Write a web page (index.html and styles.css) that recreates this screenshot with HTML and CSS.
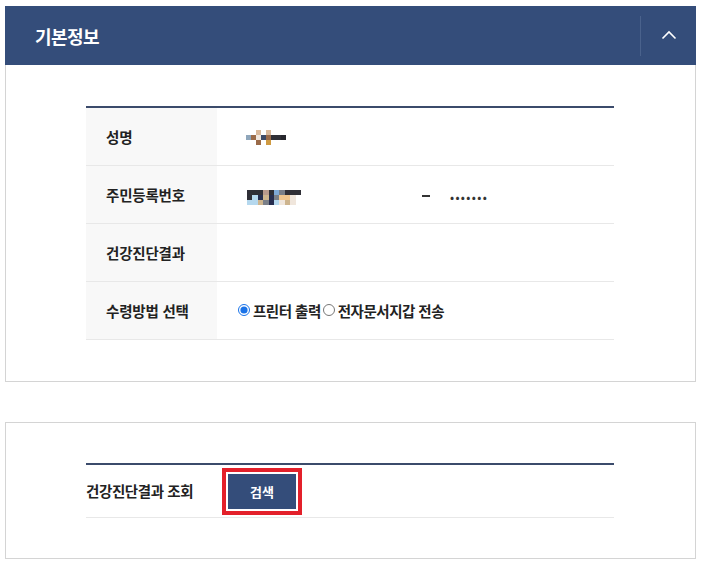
FILE: index.html
```html
<!DOCTYPE html>
<html lang="ko">
<head>
<meta charset="utf-8">
<link rel="stylesheet" href="styles.css">
</head>
<body>
<div class="page">
  <section class="panel">
    <header class="panel-head">
      <h2 class="panel-title">기본정보</h2>
      <button class="toggle" type="button" aria-label="접기">
        <svg width="16" height="10" viewBox="0 0 16 10"><path d="M1.5 8.5 L8 2 L14.5 8.5" fill="none" stroke="#fff" stroke-width="1.6"/></svg>
      </button>
    </header>
    <div class="panel-body">
      <table class="info">
        <tr>
          <th>성명</th>
          <td>
            <div class="mosaic name">
              <i></i><i></i><i class="c-tan"></i><i></i><i class="c-tan"></i><i></i><i></i><i></i>
              <i class="c-gb"></i><i class="c-br"></i><i class="c-lt"></i><i class="c-db"></i><i class="c-br"></i><i class="c-dk"></i><i class="c-dk"></i><i class="c-dk2"></i>
              <i></i><i></i><i class="c-br"></i><i></i><i class="c-or"></i><i></i><i></i><i></i>
            </div>
          </td>
        </tr>
        <tr>
          <th>주민등록번호</th>
          <td>
            <div class="rrn">
              <div class="mosaic rrn-front">
                <i class="c-dk"></i><i class="c-dk"></i><i class="c-dk"></i><i class="c-pk"></i><i class="c-dk"></i><i class="c-sb"></i><i class="c-gr"></i><i class="c-dk"></i><i class="c-dk"></i><i class="c-dk"></i>
                <i class="c-dk"></i><i class="c-lb"></i><i class="c-nv"></i><i class="c-tn2"></i><i class="c-nv"></i><i class="c-gr"></i><i class="c-or2"></i><i class="c-or2"></i><i class="c-lt"></i><i></i>
                <i class="c-lb"></i><i class="c-lb"></i><i class="c-tn2"></i><i class="c-gr"></i><i class="c-nv"></i><i class="c-lb"></i><i class="c-lt"></i><i class="c-tn2"></i><i class="c-lt"></i><i></i>
              </div>
              <span class="dash"></span>
              <span class="dots">•••••••</span>
            </div>
          </td>
        </tr>
        <tr>
          <th>건강진단결과</th>
          <td></td>
        </tr>
        <tr>
          <th>수령방법 선택</th>
          <td>
            <div class="radios">
              <label class="radio"><input type="radio" name="recv" checked><span>프린터 출력</span></label>
              <label class="radio"><input type="radio" name="recv"><span>전자문서지갑 전송</span></label>
            </div>
          </td>
        </tr>
      </table>
    </div>
  </section>

  <section class="panel plain">
    <div class="panel-body lookup-body">
      <div class="lookup">
        <span class="lookup-label">건강진단결과 조회</span>
        <span class="highlight"><button class="btn" type="button">검색</button></span>
      </div>
    </div>
  </section>
</div>
</body>
</html>
```

FILE: styles.css
```css
* { box-sizing: border-box; }
html, body { margin: 0; padding: 0; background: #fff; }
body {
  font-family: "Noto Sans CJK KR", "Noto Sans", sans-serif;
  color: #222;
}
.page {
  width: 691px;
  margin-left: 5px;
  padding-top: 6px;
}
.panel {
  border: 1px solid #d4d4d4;
  border-top: none;
}
.panel-head {
  height: 59px;
  margin: 0 -1px;
  background: #344d7a;
  display: flex;
  align-items: center;
  justify-content: space-between;
  padding-left: 30px;
}
.panel-title {
  margin: 0;
  color: #fff;
  font-size: 18px;
  font-weight: 700;
  letter-spacing: -0.6px;
}
.toggle {
  width: 56px;
  height: 40px;
  border: none;
  border-left: 1px solid #4a628c;
  background: transparent;
  display: flex;
  align-items: center;
  justify-content: center;
  padding: 0 0 2px 0;
}
.panel-body {
  padding: 41px 81px 41px 80px;
}
.info {
  width: 100%;
  border-collapse: collapse;
  border-top: 2px solid #3b4b6b;
}
.info th, .info td {
  height: 58px;
  border-bottom: 1px solid #e8e8e8;
  font-size: 14.5px;
  vertical-align: middle;
}
.info th {
  width: 131px;
  background: #f8f8f8;
  text-align: left;
  padding: 0 0 0 20px;
  font-weight: 700;
  color: #222;
  letter-spacing: -0.2px;
}
.info td {
  padding: 0 0 0 20px;
}
.mosaic {
  display: grid;
  grid-auto-rows: 5px;
}
.mosaic i { display: block; }
.name {
  grid-template-columns: repeat(8, 5px);
  width: 40px;
  margin-left: 9px;
  margin-top: 3px;
}
.rrn { display: flex; align-items: center; }
.rrn-front {
  grid-template-columns: repeat(10, 5.4px);
  margin-left: 10px;
  margin-top: 6px;
}
.dash {
  width: 8px;
  height: 2px;
  background: #333;
  margin-left: 121px;
  margin-top: 4px;
}
.dots {
  margin-left: 20px;
  font-size: 12px;
  letter-spacing: 1.4px;
  color: #333;
  margin-top: 4px;
}
.c-tan { background: #d9b89a; }
.c-gb { background: #8fa6bb; }
.c-br { background: #9a6a48; }
.c-lt { background: #f0e6dc; }
.c-db { background: #3d4a66; }
.c-dk { background: #2f2f36; }
.c-dk2 { background: #26262c; }
.c-or { background: #cf9a42; }
.c-lb { background: #b5d8ee; }
.c-gr { background: #7a7f88; }
.c-pk { background: #b8998c; }
.c-sb { background: #7fa9d6; }
.c-nv { background: #262d4f; }
.c-tn2 { background: #cdb48e; }
.c-or2 { background: #efc58e; }

.radios { display: flex; align-items: center; margin-left: 0; }
.radio {
  display: inline-flex;
  align-items: center;
  font-size: 14.5px;
  font-weight: 700;
  color: #222;
  letter-spacing: -0.5px;
}
.radio input {
  margin: 0 3px 0 1px;
  width: 12px;
  height: 12px;
  accent-color: #1a73e8;
}
.radio + .radio input { margin-left: 2px; }

.plain { border-top: 1px solid #d4d4d4; margin-top: 40px; }
.lookup-body { padding: 40px 81px 40px 80px; }
.lookup {
  border-top: 2px solid #3b4b6b;
  border-bottom: 1px solid #e8e8e8;
  height: 55px;
  display: flex;
  align-items: center;
}
.lookup-label {
  width: 136px;
  font-size: 14.5px;
  font-weight: 700;
  letter-spacing: -0.4px;
  color: #222;
}
.highlight {
  display: inline-block;
  border: 4px solid #e3202a;
  padding: 2px;
  margin-top: 1px;
}
.btn {
  display: block;
  width: 68px;
  height: 35px;
  border: none;
  background: #344d7a;
  color: #fff;
  font-family: "Noto Sans CJK KR", sans-serif;
  font-size: 13px;
  font-weight: 700;
  padding: 0;
}
```
